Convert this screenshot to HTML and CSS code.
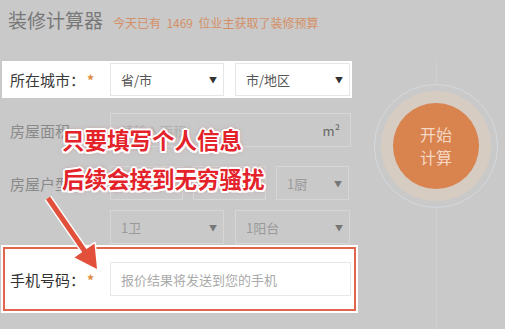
FILE: index.html
```html
<!DOCTYPE html>
<html lang="zh-CN">
<head>
    <meta charset="UTF-8">
    <meta name="viewport" content="width=device-width, initial-scale=1.0">
    <title>装修计算器</title>
    <link rel="stylesheet" href="styles.css">
</head>
<body>
    <div class="page">
        <div class="header">
            <h1>装修计算器</h1>
            <span class="count">今天已有 &nbsp;1469 &nbsp;位业主获取了装修预算</span>
        </div>

        <div class="main">
            <div class="form">
                <div class="row city">
                    <label>所在城市：<i>*</i></label>
                    <div class="controls">
                        <div class="select w114"><span>省/市</span><b>▼</b></div>
                        <div class="select w115"><span>市/地区</span><b>▼</b></div>
                    </div>
                </div>

                <div class="row dim area">
                    <label>房屋面积</label>
                    <div class="controls">
                        <div class="input"><span class="ph">请输入面积</span><span class="unit">m²</span></div>
                    </div>
                </div>

                <div class="row dim house">
                    <label>房屋户型</label>
                    <div class="controls">
                        <div class="select w73"></div>
                        <div class="select w73"></div>
                        <div class="select w73"><span>1厨</span><b>▼</b></div>
                    </div>
                </div>

                <div class="row dim bath">
                    <label></label>
                    <div class="controls">
                        <div class="select w114"><span>1卫</span><b>▼</b></div>
                        <div class="select w115"><span>1阳台</span><b>▼</b></div>
                    </div>
                </div>

                <div class="phone">
                    <div class="phone-inner">
                        <label>手机号码：<i>*</i></label>
                        <div class="input phone-input"><span class="ph">报价结果将发送到您的手机</span></div>
                    </div>
                </div>
            </div>

            <div class="side">
                <div class="ring">
                    <div class="halo">
                        <button class="start">开始<br>计算</button>
                    </div>
                </div>
            </div>
        </div>

        <div class="note">
            <p>只要填写个人信息</p>
            <p>后续会接到无穷骚扰</p>
        </div>

        <svg class="arrow" width="505" height="329" viewBox="0 0 505 329">
            <line x1="48" y1="198" x2="86" y2="253" stroke="#fff" stroke-width="8"/>
            <polygon points="97,269 94.5,243.5 74.5,257.5" fill="#fff" stroke="#fff" stroke-width="3" stroke-linejoin="round"/>
            <line x1="48" y1="198" x2="86" y2="253" stroke="#e2503b" stroke-width="5"/>
            <polygon points="97,269 94.5,243.5 74.5,257.5" fill="#e2503b"/>
        </svg>
    </div>
</body>
</html>
```

FILE: styles.css
```css
* {
    margin: 0;
    padding: 0;
    box-sizing: border-box;
    font-family: 'Noto Sans CJK SC', 'Noto Sans', sans-serif;
}

body {
    background: #c9c9c9;
    width: 505px;
    height: 329px;
    overflow: hidden;
}

.page {
    position: relative;
    height: 329px;
}

.header {
    display: flex;
    align-items: baseline;
    padding: 8px 0 0 8px;
    height: 32px;
}

.header h1 {
    font-size: 19px;
    font-weight: normal;
    line-height: 24px;
    color: #787878;
}

.count {
    margin-left: 10px;
    font-size: 12px;
    color: #d58f66;
}

.main {
    display: flex;
    margin-top: 29px;
}

.form {
    width: 360px;
}

.row {
    display: flex;
    align-items: center;
    margin-left: 2px;
    width: 350px;
    height: 34px;
}

.row label {
    width: 108px;
    padding-left: 8px;
    font-size: 15px;
    color: #8a8a8a;
}

label i {
    font-style: normal;
    font-weight: bold;
    font-size: 14px;
    color: #e08a3c;
    margin-left: 2px;
}

.controls {
    display: flex;
    gap: 10px;
}

.city {
    height: 37px;
    padding: 2px 2px 2px 0;
    background: #fff;
}

.city label {
    color: #3a3a3a;
}

.city .controls {
    gap: 11px;
}

.area {
    margin-top: 15px;
}

.house {
    margin-top: 19px;
}

.bath {
    margin-top: 10px;
}

.bath .controls {
    gap: 11px;
}

.select,
.input {
    display: flex;
    align-items: center;
    justify-content: space-between;
    height: 33px;
    padding: 0 6px 0 10px;
    border: 1px solid #e6e6e6;
    background: #fff;
    font-size: 13px;
    color: #555;
}

.select b {
    font-size: 8px;
    font-weight: normal;
    color: #333;
}

.w114 { width: 114px; }
.w115 { width: 115px; }
.w73 { width: 73px; }

.dim .select,
.dim .input {
    height: 34px;
    background: transparent;
    border-color: #d6d6d6;
    color: #9a9a9a;
}

.dim .select b {
    color: #777;
}

.area .input {
    width: 241px;
    padding-right: 10px;
}

.ph {
    color: #b2b2b2;
}

.unit {
    color: #666;
}

.phone {
    margin: 1px 0 0 1px;
    width: 357px;
    padding: 2px;
    background: #fff;
}

.phone-inner {
    display: flex;
    align-items: center;
    height: 64px;
    border: 2px solid #e0654d;
}

.phone-inner label {
    width: 105px;
    padding-left: 5px;
    font-size: 15px;
    color: #333;
}

.phone-input {
    width: 241px;
    height: 34px;
    border-color: #e8e8e8;
}

.phone-input .ph {
    color: #aaa;
}

.side {
    position: relative;
    flex: 1;
    display: flex;
    justify-content: center;
    align-items: flex-start;
    padding: 23px 0 0 7px;
}

.side::before {
    content: '';
    position: absolute;
    top: 0;
    bottom: -20px;
    left: 76px;
    width: 1px;
    background: #cfcfcf;
}

.ring {
    position: relative;
    width: 124px;
    height: 124px;
    padding: 6px;
    border: 1px solid #d3d9de;
    border-radius: 50%;
    background: #c9c9c9;
}

.halo {
    width: 110px;
    height: 110px;
    padding: 12px;
    border-radius: 50%;
    background: #d6ccc2;
}

.start {
    width: 86px;
    height: 86px;
    border: none;
    border-radius: 50%;
    background: #d9834f;
    color: #f4d8c4;
    font-size: 16px;
    line-height: 23px;
}

.note {
    position: absolute;
    left: 62px;
    top: 126px;
}

.note p {
    font-size: 22.5px;
    font-weight: bold;
    line-height: 26px;
    color: #e3222a;
    text-shadow:
        2px 0 0 #fff, -2px 0 0 #fff, 0 2px 0 #fff, 0 -2px 0 #fff,
        1.5px 1.5px 0 #fff, -1.5px -1.5px 0 #fff, 1.5px -1.5px 0 #fff, -1.5px 1.5px 0 #fff,
        0 0 5px rgba(190, 60, 60, 0.6);
}

.note p + p {
    margin-top: 13px;
}

.arrow {
    position: absolute;
    left: 0;
    top: 0;
    pointer-events: none;
}
```
